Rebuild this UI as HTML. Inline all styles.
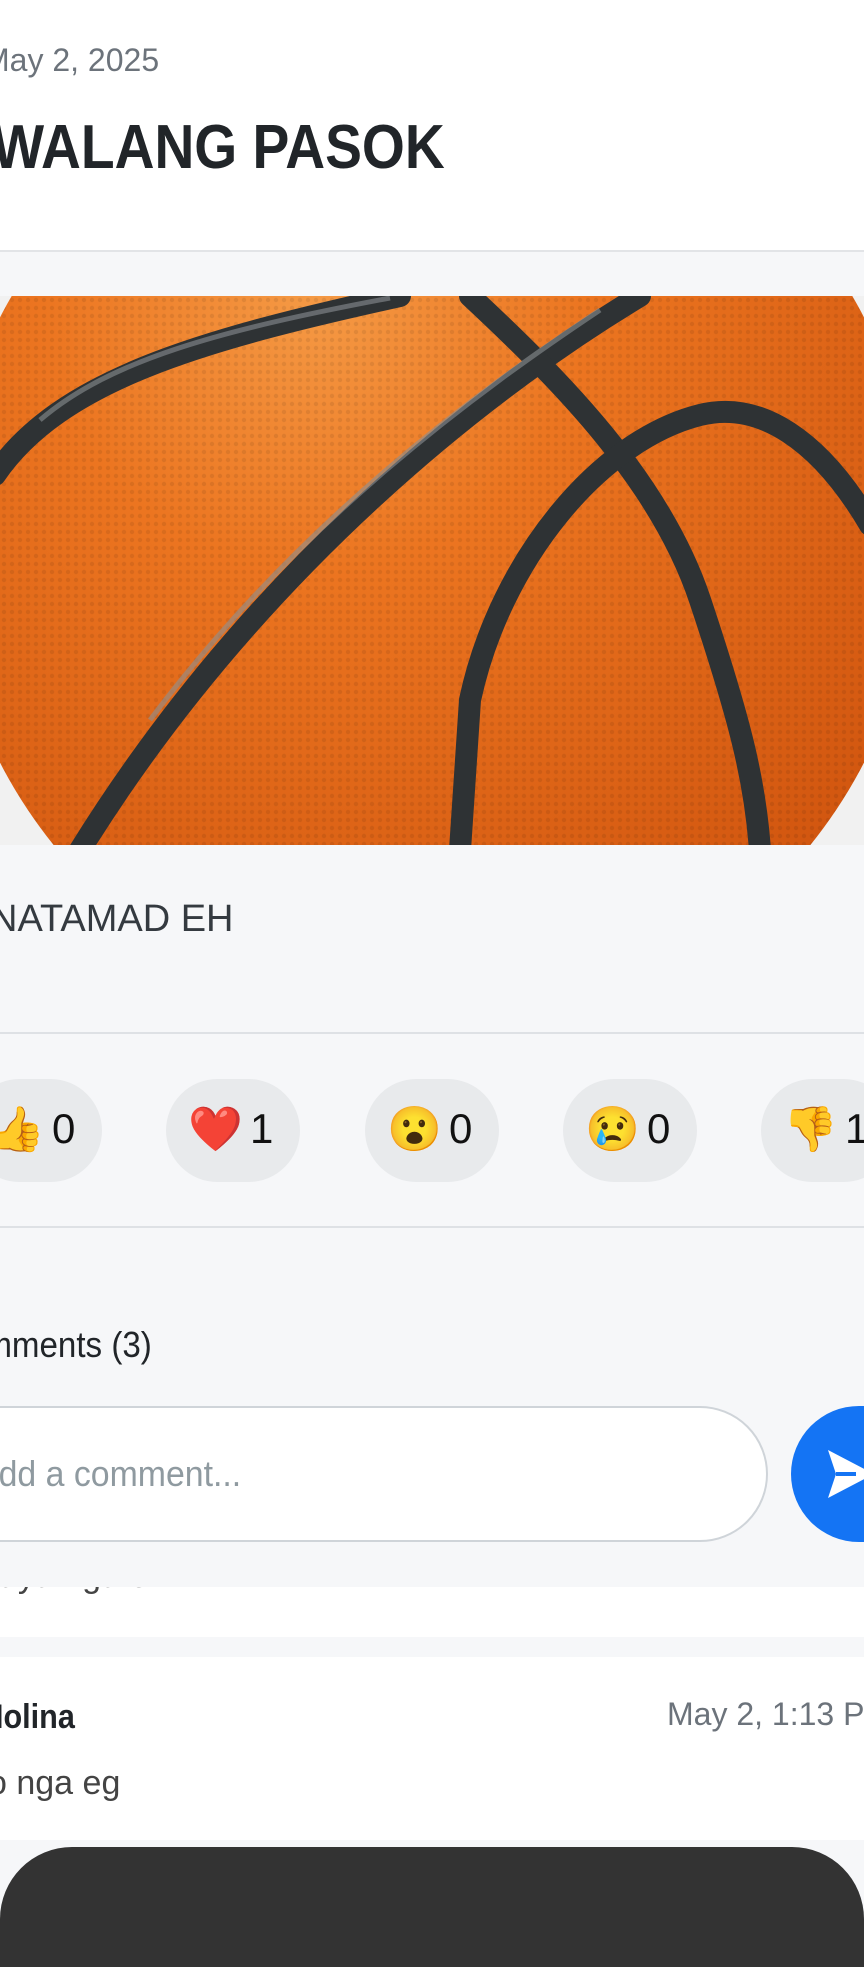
<!DOCTYPE html>
<html><head><meta charset="utf-8"><style>
*{margin:0;padding:0;box-sizing:border-box}
body{width:864px;height:1920px;overflow:hidden;background:#f6f7f9;font-family:"Liberation Sans",sans-serif;position:relative}
.a{position:absolute;white-space:nowrap}
.sx{display:inline-block;transform-origin:left center}
.pill{position:absolute;top:1079px;width:134px;height:103px;border-radius:52px;background:#e8eaec;}
.pill span{position:absolute;top:22px;font-size:42px;color:#111}
.pill .e{left:22px;font-size:44px;top:24px}
.pill .n{left:84px;top:26px}
</style></head><body>
<div class="a" style="left:0;top:0;width:864px;height:252px;background:#fff;border-bottom:2px solid #e2e4e7"></div>
<div class="a" style="left:-17px;top:42px;font-size:32px;color:#6c737b">May 2, 2025</div>
<div class="a" style="left:-8px;top:112px;font-size:62px;font-weight:bold;color:#212529"><span class="sx" style="transform:scaleX(0.89)">WALANG PASOK</span></div>

<svg class="a" style="left:0;top:296px" width="864" height="549" viewBox="0 296 864 549">
<defs>
<radialGradient id="g" cx="0.38" cy="0.25" r="0.8">
<stop offset="0" stop-color="#f59a45"/><stop offset="0.35" stop-color="#ec7520"/><stop offset="1" stop-color="#d0540e"/>
</radialGradient>
<pattern id="dots" width="8" height="8" patternUnits="userSpaceOnUse"><circle cx="4" cy="4" r="2.2" fill="#000" opacity="0.08"/></pattern>
</defs>
<rect x="0" y="296" width="864" height="549" fill="#f1f1f1"/>
<circle cx="432" cy="540" r="486" fill="url(#g)"/>
<circle cx="432" cy="540" r="486" fill="url(#dots)"/>
<g fill="none" stroke="#2e3234" stroke-width="22" stroke-linecap="round">
<path d="M-5,475 C60,380 200,340 400,296"/>
<path d="M640,296 C500,380 260,560 80,850"/>
<path d="M470,296 C560,380 660,480 700,600 C740,720 755,780 760,850"/>
<path d="M870,525 C820,440 760,400 700,415 C600,440 500,560 470,700 L460,850"/>
</g>
<g fill="none" stroke="#8a8f93" stroke-width="5" opacity="0.6">
<path d="M40,420 C110,360 220,330 390,298"/>
<path d="M600,310 C480,390 300,520 150,720"/>
</g>
</svg>

<div class="a" style="left:-10px;top:898px;font-size:38px;color:#343a40">NATAMAD EH</div>
<div class="a" style="left:0;top:1032px;width:864px;height:2px;background:#dee1e5"></div>

<div class="pill" style="left:-32px"><span class="e">👍</span><span class="n">0</span></div>
<div class="pill" style="left:166px"><span class="e">❤️</span><span class="n">1</span></div>
<div class="pill" style="left:365px"><span class="e">😮</span><span class="n">0</span></div>
<div class="pill" style="left:563px"><span class="e">😢</span><span class="n">0</span></div>
<div class="pill" style="left:761px"><span class="e">👎</span><span class="n">1</span></div>

<div class="a" style="left:0;top:1226px;width:864px;height:2px;background:#dee1e5"></div>

<div class="a" style="left:-58px;top:1324px;font-size:36px;color:#212529"><span class="sx" style="transform:scaleX(0.92)">Comments (3)</span></div>
<div class="a" style="left:-100px;top:1406px;width:868px;height:136px;border:2px solid #cfd4d9;border-radius:68px;background:#fff"></div>
<div class="a" style="left:-24px;top:1453px;font-size:36px;color:#8f9aa0"><span class="sx" style="transform:scaleX(0.94)">Add a comment...</span></div>
<div class="a" style="left:791px;top:1406px;width:140px;height:136px;border-radius:68px;background:#1474f4"></div>
<svg class="a" style="left:826px;top:1448px" width="40" height="52" viewBox="0 0 40 52"><path d="M2,2 L48,26 L2,50 L10,26 Z" fill="#fff"/><path d="M10,26 L30,26" stroke="#1474f4" stroke-width="4"/></svg>

<div class="a" style="left:0;top:1587px;width:864px;height:50px;background:#fff;overflow:hidden"><div class="a" style="left:-20px;top:-30px;font-size:34px;color:#444">aaya nga eh</div></div>
<div class="a" style="left:0;top:1657px;width:864px;height:183px;background:#fff"></div>
<div class="a" style="left:-22px;top:1698px;font-size:34px;font-weight:bold;color:#212529"><span class="sx" style="transform:scaleX(0.9)">Molina</span></div>
<div class="a" style="left:667px;top:1696px;font-size:32px;color:#6c737b">May 2, 1:13 PM</div>
<div class="a" style="left:-12px;top:1764px;font-size:34px;color:#444">o nga eg</div>

<div class="a" style="left:0;top:1847px;width:864px;height:120px;background:#333;border-radius:72px 72px 0 0"></div>
</body></html>
